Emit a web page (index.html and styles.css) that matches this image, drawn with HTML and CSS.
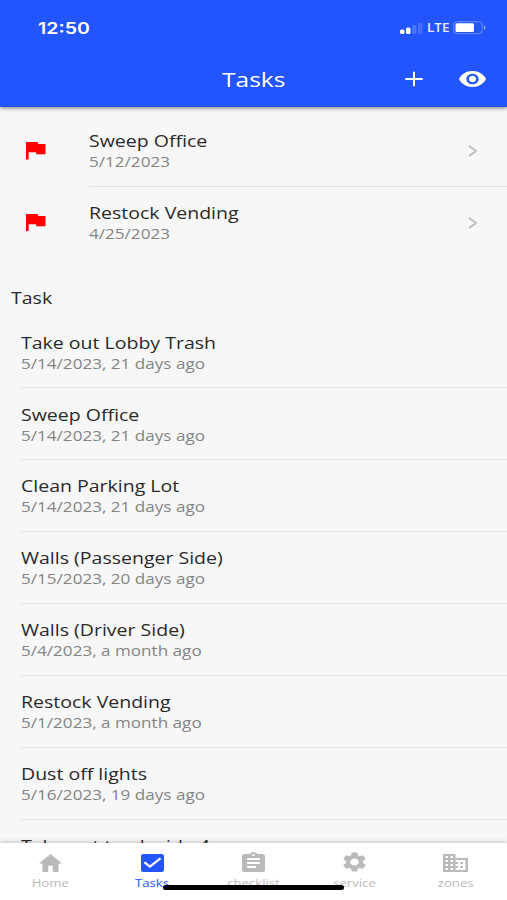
FILE: index.html
```html
<!DOCTYPE html>
<html lang="en">
<head>
<meta charset="utf-8">
<title>Tasks</title>
<link rel="stylesheet" href="styles.css">
</head>
<body>
<div class="phone">
  <header class="header">
    <div class="status">
      <span class="clock wide">12:50</span>
      <div class="indicators">
        <svg class="signal" viewBox="0 0 24 14"><rect x="0" y="8.500" width="4.500" height="4.500" rx="1.500" fill="#fff"/><rect x="6" y="6.500" width="4.500" height="6.500" rx="1.500" fill="#fff"/><rect x="12" y="4" width="4.500" height="9" rx="1.500" fill="#4c74ff"/><rect x="18" y="1.500" width="4.500" height="11.500" rx="1.500" fill="#446dff"/></svg>
        <span class="carrier">LTE</span>
        <svg class="battery" viewBox="0 0 34 14"><rect x=".7" y=".7" width="28.600" height="12" rx="3.500" fill="none" stroke="#6d8eff"/><rect x="2.500" y="2.300" width="18.500" height="8.800" rx="1.500" fill="#fff"/><path d="M31 4.500c2 .6 2 3.800 0 4.400z" fill="#8ca6ff"/></svg>
      </div>
    </div>
    <div class="navbar">
      <h1 class="wide">Tasks</h1>
      <div class="actions">
        <svg class="plus" viewBox="0 0 18 16"><path d="M9 .8v14.400M.3 8h17.400" stroke="#fff" stroke-width="2"/></svg>
        <svg class="eye" viewBox="1 4.500 22 15" preserveAspectRatio="none"><path fill="#fff" d="M12 4.500C7 4.500 2.730 7.610 1 12c1.730 4.390 6 7.500 11 7.500s9.270-3.110 11-7.500c-1.730-4.390-6-7.500-11-7.500zM12 17c-2.760 0-5-2.240-5-5s2.240-5 5-5 5 2.240 5 5-2.240 5-5 5zm0-8c-1.660 0-3 1.340-3 3s1.340 3 3 3 3-1.340 3-3-1.340-3-3-3z"/></svg>
      </div>
    </div>
  </header>
  <main class="content">
    <ul class="list flagged">
      <li class="row"><svg class="flag" viewBox="5 4 15 17" preserveAspectRatio="none"><path d="M14.400 6L14 4H5v17h2v-7h5.600l.4 2h7V6z"/></svg><div class="item"><div><p class="title wide">Sweep Office</p><p class="sub wide">5/12/2023</p></div><svg class="chevron" viewBox="0 0 9 12"><path d="M1 1l7 5-7 5"/></svg></div></li>
      <li class="row"><svg class="flag" viewBox="5 4 15 17" preserveAspectRatio="none"><path d="M14.400 6L14 4H5v17h2v-7h5.600l.4 2h7V6z"/></svg><div class="item"><div><p class="title wide">Restock Vending</p><p class="sub wide">4/25/2023</p></div><svg class="chevron" viewBox="0 0 9 12"><path d="M1 1l7 5-7 5"/></svg></div></li>
    </ul>
    <h2 class="section"><span class="wide">Task</span></h2>
    <ul class="list tasks">
      <li class="row"><div class="item"><div><p class="title wide">Take out Lobby Trash</p><p class="sub wide">5/14/2023, 21 days ago</p></div></div></li>
      <li class="row"><div class="item"><div><p class="title wide">Sweep Office</p><p class="sub wide">5/14/2023, 21 days ago</p></div></div></li>
      <li class="row"><div class="item"><div><p class="title wide">Clean Parking Lot</p><p class="sub wide">5/14/2023, 21 days ago</p></div></div></li>
      <li class="row"><div class="item"><div><p class="title wide">Walls (Passenger Side)</p><p class="sub wide">5/15/2023, 20 days ago</p></div></div></li>
      <li class="row"><div class="item"><div><p class="title wide">Walls (Driver Side)</p><p class="sub wide">5/4/2023, a month ago</p></div></div></li>
      <li class="row"><div class="item"><div><p class="title wide">Restock Vending</p><p class="sub wide">5/1/2023, a month ago</p></div></div></li>
      <li class="row"><div class="item"><div><p class="title wide">Dust off lights</p><p class="sub wide">5/16/2023, 19 days ago</p></div></div></li>
      <li class="row"><div class="item"><div><p class="title wide">Take out trash side 4</p></div></div></li>
    </ul>
  </main>
  <nav class="tabs">
    <a class="tab"><svg viewBox="2 3 20 17" preserveAspectRatio="none"><path d="M10 20v-6h4v6h5v-8h3L12 3 2 12h3v8z"/></svg><span>Home</span></a>
    <a class="tab active"><svg viewBox="3 3 18 18" preserveAspectRatio="none"><path d="M19 3H5c-1.110 0-2 .9-2 2v14c0 1.100.89 2 2 2h14c1.110 0 2-.9 2-2V5c0-1.100-.89-2-2-2zm-9 14l-5-5 1.410-1.410L10 14.170l7.590-7.590L19 8l-9 9z"/></svg><span>Tasks</span></a>
    <a class="tab tall"><svg viewBox="3 1 18 20" preserveAspectRatio="none"><path d="M19 3h-4.180C14.400 1.840 13.300 1 12 1s-2.400.84-2.820 2H5c-1.100 0-2 .9-2 2v14c0 1.100.9 2 2 2h14c1.100 0 2-.9 2-2V5c0-1.100-.9-2-2-2zm-7 0c.55 0 1 .45 1 1s-.45 1-1 1-1-.45-1-1 .45-1 1-1zm2 14H7v-2h7v2zm3-4H7v-2h10v2zm0-4H7V7h10v2z"/></svg><span>checklist</span></a>
    <a class="tab tall"><svg viewBox="2.300 2 19.400 20" preserveAspectRatio="none"><path d="M19.140 12.940c.04-.3.060-.61.060-.94 0-.32-.02-.64-.07-.94l2.030-1.580c.18-.14.23-.41.12-.61l-1.920-3.320c-.12-.22-.37-.29-.59-.22l-2.390.96c-.5-.38-1.030-.7-1.620-.94l-.36-2.540c-.04-.24-.24-.41-.48-.41h-3.840c-.24 0-.43.17-.47.41l-.36 2.540c-.59.24-1.130.57-1.620.94l-2.390-.96c-.22-.08-.47 0-.59.22L2.740 8.870c-.12.21-.08.47.12.61l2.030 1.580c-.05.3-.09.63-.09.94s.02.64.07.94l-2.030 1.580c-.18.14-.23.41-.12.61l1.920 3.320c.12.22.37.29.59.22l2.390-.96c.5.38 1.030.7 1.620.94l.36 2.540c.05.24.24.41.48.41h3.840c.24 0 .44-.17.47-.41l.36-2.540c.59-.24 1.130-.56 1.620-.94l2.390.96c.22.08.47 0 .59-.22l1.920-3.320c.12-.22.07-.47-.12-.61l-2.010-1.580zM12 15.600c-1.980 0-3.600-1.620-3.600-3.600s1.620-3.600 3.600-3.600 3.600 1.620 3.600 3.600-1.620 3.600-3.600 3.600z"/></svg><span>service</span></a>
    <a class="tab"><svg class="building" viewBox="2 3 20 18" preserveAspectRatio="none"><path d="M12 7V3H2v18h20V7H12zM6 19H4v-2h2v2zm0-4H4v-2h2v2zm0-4H4V9h2v2zm0-4H4V5h2v2zm4 12H8v-2h2v2zm0-4H8v-2h2v2zm0-4H8V9h2v2zm0-4H8V5h2v2zm10 12h-8v-2h2v-2h-2v-2h2v-2h-2V9h8v10zm-2-8h-2v2h2v-2zm0 4h-2v2h2v-2z"/></svg><span>zones</span></a>
    <div class="home-bar"></div>
  </nav>
</div>
</body>
</html>
```
FILE: styles.css
```css
* { box-sizing: border-box; margin: 0; padding: 0; }
body { font-family: "Open Sans", sans-serif; background: #f7f7f7; color: #2a2a2a; }
svg { display: block; flex: none; }
ul { list-style: none; }
.phone { width: 507px; height: 900px; display: flex; flex-direction: column; overflow: hidden; }
.wide { display: block; width: max-content; white-space: nowrap; transform: scaleX(1.205); transform-origin: left center; }

.header { height: 107px; flex: none; background: #2355ff; color: #fff; box-shadow: 0 1px 4px rgba(0, 0, 0, .5); z-index: 1; }
.status { height: 55px; display: flex; justify-content: space-between; padding: 1px 20px 0 38px; }
.clock { font-family: Inter, sans-serif; font-weight: 600; font-size: 16px; line-height: 55px; transform: scaleX(1.22); }
.indicators { display: flex; align-items: center; height: 54px; }
.signal { width: 24px; height: 14px; }
.carrier { font-size: 12px; line-height: 14px; font-weight: 600; width: 22px; margin: 0 4px 1px 3px; transform: scaleX(1.12); transform-origin: left center; color: #e8edff; }
.battery { width: 34px; height: 14px; }
.navbar { height: 50px; display: grid; grid-template-columns: 1fr auto 1fr; align-items: center; }
.navbar h1 { grid-column: 2; font-size: 19.900px; font-weight: 400; line-height: 48px; transform: scaleX(1.23); transform-origin: center; }
.actions { grid-column: 3; display: flex; justify-content: flex-end; align-items: center; gap: 36px; padding: 0 21px 2px 0; }
.plus { width: 18px; height: 16px; }
.eye { width: 27px; height: 16px; }

.content { flex: 1; min-height: 0; overflow: hidden; padding-top: 8px; }
.row { height: 71.900px; display: flex; }
.item { flex: 1; display: flex; justify-content: space-between; border-bottom: 1.500px solid #e3e3e3; padding-top: 16.300px; }
.row:last-child .item { border-bottom: 0; }
.title { font-size: 16.200px; line-height: 21px; }
.sub { font-size: 14.200px; line-height: 20px; color: #858585; }
.flagged .row { padding-left: 26px; }
.flag { width: 19.500px; height: 17.500px; margin: 27px 43.500px 0 0; fill: #fe0000; }
.chevron { width: 9px; height: 12px; margin: 13.500px 30px 0 0; fill: none; stroke: #bdbdbd; stroke-width: 1.800; }
.section { height: 57.600px; padding: 27.500px 0 0 11px; font-size: 16.200px; font-weight: 400; line-height: 24px; }
.tasks .row { padding-left: 20.600px; }

.tabs { position: relative; height: 57px; flex: none; display: grid; grid-template-columns: repeat(5, 1fr); background: #fff; box-shadow: 0 -1px 4px rgba(0, 0, 0, .2); z-index: 1; }
.tab { display: flex; flex-direction: column; align-items: center; padding-top: 11px; color: #bababa; }
.tab svg { width: 23px; height: 18px; fill: currentColor; }
.tab.tall { padding-top: 9px; }
.tab.tall svg { height: 20px; }
.tab .building { width: 25px; }
.tab span { font-size: 10.800px; line-height: 14px; margin-top: 4px; transform: scaleX(1.22); }
.tab.active { color: #2355ff; }
.tab.active span { font-weight: 500; }
.tab:nth-child(5) { padding-right: 1px; }
.home-bar { position: absolute; left: 163px; top: 42px; width: 181px; height: 5px; border-radius: 3px; background: #000; }
```
